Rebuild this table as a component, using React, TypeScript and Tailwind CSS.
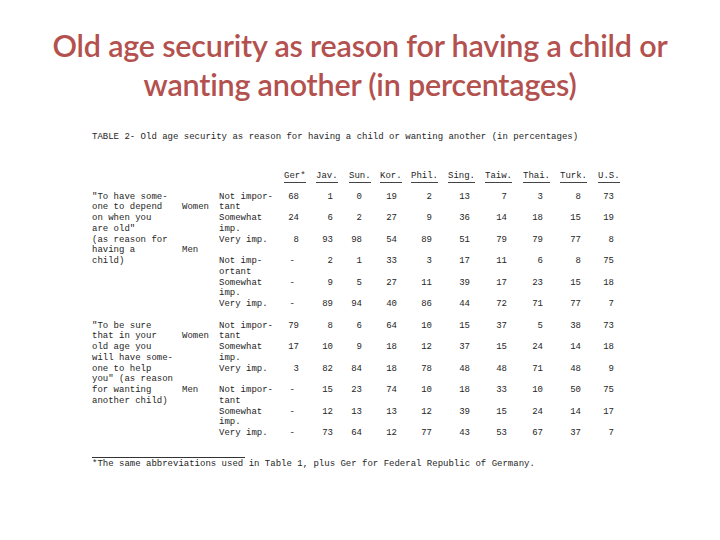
const cols = ["Ger*", "Jav.", "Sun.", "Kor.", "Phil.", "Sing.", "Taiw.", "Thai.", "Turk.", "U.S."];
const headWidths = ["w-[32px]", "w-[33px]", "w-[31px]", "w-[31px]", "w-[37px]", "w-[37px]", "w-[38px]", "w-[37px]", "w-[38px]", "w-[32px]"];
const numWidths = ["w-[15px]", "w-[34px]", "w-[29px]", "w-[35px]", "w-[35px]", "w-[38px]", "w-[37px]", "w-[36px]", "w-[38px]", "w-[33px]"];

const block1 = [
  ["68", "1", "0", "19", "2", "13", "7", "3", "8", "73"],
  ["24", "6", "2", "27", "9", "36", "14", "18", "15", "19"],
  ["8", "93", "98", "54", "89", "51", "79", "79", "77", "8"],
  ["-", "2", "1", "33", "3", "17", "11", "6", "8", "75"],
  ["-", "9", "5", "27", "11", "39", "17", "23", "15", "18"],
  ["-", "89", "94", "40", "86", "44", "72", "71", "77", "7"],
];

const block2 = [
  ["79", "8", "6", "64", "10", "15", "37", "5", "38", "73"],
  ["17", "10", "9", "18", "12", "37", "15", "24", "14", "18"],
  ["3", "82", "84", "18", "78", "48", "48", "71", "48", "9"],
  ["-", "15", "23", "74", "10", "18", "33", "10", "50", "75"],
  ["-", "12", "13", "13", "12", "39", "15", "24", "14", "17"],
  ["-", "73", "64", "12", "77", "43", "53", "67", "37", "7"],
];

function Block({
  label,
  sex,
  items,
  rows,
}: {
  label: string;
  sex: string;
  items: string;
  rows: string[][];
}) {
  return (
    <div className="flex">
      <div className="w-[90px] whitespace-pre">{label}</div>
      <div className="w-[37px] whitespace-pre">{sex}</div>
      <div className="w-[65px] whitespace-pre">{items}</div>
      {cols.map((_, c) => (
        <div key={c} className={`${numWidths[c]} flex flex-col items-end`}>
          {rows.map((r, i) => (
            <div key={i} className={`h-[21.5px] ${r[c] === "-" ? "pr-[4px]" : ""}`}>
              {r[c]}
            </div>
          ))}
        </div>
      ))}
    </div>
  );
}

export default function App() {
  return (
    <div className="w-[720px] h-[540px] bg-white overflow-hidden">
      <h1 className="pt-[26px] text-center text-[30.5px] font-semibold tracking-[-0.2px] leading-[39px] text-[#b3514f] font-['Lato',sans-serif]">
        Old age security as reason for having a child or
        <br />
        wanting another (in percentages)
      </h1>

      <div className="mt-[28px] pl-[92px] font-['Liberation_Mono',monospace] text-[9px] leading-[10.75px] text-[#262626]">
        <div>TABLE 2- Old age security as reason for having a child or wanting another (in percentages)</div>

        <div className="mt-[28px] flex pl-[192px]">
          {cols.map((c, i) => (
            <div key={c} className={headWidths[i]}>
              <span className="border-b border-[#444] pb-[1px]">{c}</span>
            </div>
          ))}
        </div>

        <div className="mt-[10px]">
          <Block
            label={'"To have some-\none to depend\non when you\nare old"\n(as reason for\nhaving a\nchild)'}
            sex={"\nWomen\n\n\n\nMen"}
            items={"Not impor-\ntant\nSomewhat\nimp.\nVery imp.\n\nNot imp-\nortant\nSomewhat\nimp.\nVery imp."}
            rows={block1}
          />
          <Block
            label={'"To be sure\nthat in your\nold age you\nwill have some-\none to help\nyou" (as reason\nfor wanting\nanother child)'}
            sex={"\nWomen\n\n\n\n\nMen"}
            items={"Not impor-\ntant\nSomewhat\nimp.\nVery imp.\n\nNot impor-\ntant\nSomewhat\nimp.\nVery imp."}
            rows={block2}
          />
        </div>

        <div className="mt-[7px] w-[153px] h-[1.5px] bg-[#333]" />
        <div className="mt-[1px]">*The same abbreviations used in Table 1, plus Ger for Federal Republic of Germany.</div>
      </div>
    </div>
  );
}
